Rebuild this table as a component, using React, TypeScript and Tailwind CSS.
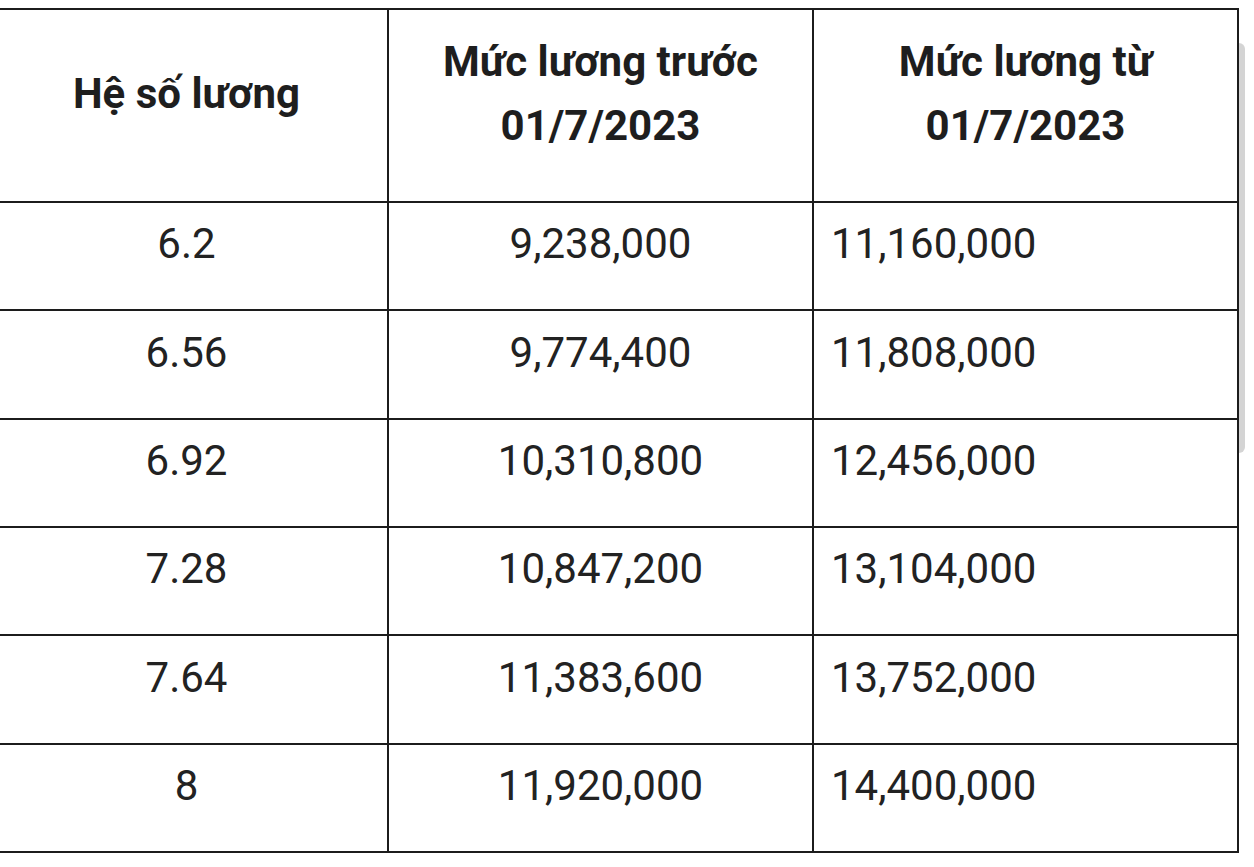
const rows = [
  { h: "6.2", before: "9,238,000", after: "11,160,000", height: "h-[108px]" },
  { h: "6.56", before: "9,774,400", after: "11,808,000", height: "h-[109px]" },
  { h: "6.92", before: "10,310,800", after: "12,456,000", height: "h-[108px]" },
  { h: "7.28", before: "10,847,200", after: "13,104,000", height: "h-[108px]" },
  { h: "7.64", before: "11,383,600", after: "13,752,000", height: "h-[109px]" },
  { h: "8", before: "11,920,000", after: "14,400,000", height: "h-[108px]" },
];

const cell = "flex items-center border-r-2 border-b-2 border-[#1c1c1c] pb-6";

export default function App() {
  return (
    <div
      className="relative h-[867px] w-[1254px] overflow-hidden bg-white text-[#222]"
      style={{ fontFamily: "Roboto, 'Noto Sans', Arial, sans-serif" }}
    >
      <div className="ml-[-16px] mt-2 grid w-[1255px] grid-cols-[403px_425px_425px] border-l-2 border-t-2 border-[#1c1c1c]">
        <div className={`${cell} h-[193px] justify-center text-[42px] font-bold leading-[64px] text-[#1e1e1e]`}>
          Hệ số lương
        </div>
        <div className={`${cell} h-[193px] flex-col justify-center text-center text-[42px] font-bold leading-[64px] text-[#1e1e1e]`}>
          <span>Mức lương trước</span>
          <span>01/7/2023</span>
        </div>
        <div className={`${cell} h-[193px] flex-col justify-center text-center text-[42px] font-bold leading-[64px] text-[#1e1e1e]`}>
          <span>Mức lương từ</span>
          <span>01/7/2023</span>
        </div>

        {rows.map((r) => (
          <div key={r.h} className="contents">
            <div className={`${cell} ${r.height} justify-center text-[42px] leading-none`}>{r.h}</div>
            <div className={`${cell} ${r.height} justify-center text-[42px] leading-none`}>{r.before}</div>
            <div className={`${cell} ${r.height} pl-[17px] text-[42px] leading-none`}>{r.after}</div>
          </div>
        ))}
      </div>

      {/* scrollbar thumb */}
      <div className="absolute left-[1239px] top-[43px] h-[410px] w-[6px] rounded-r-full bg-[#d4d4d4]" />
    </div>
  );
}
